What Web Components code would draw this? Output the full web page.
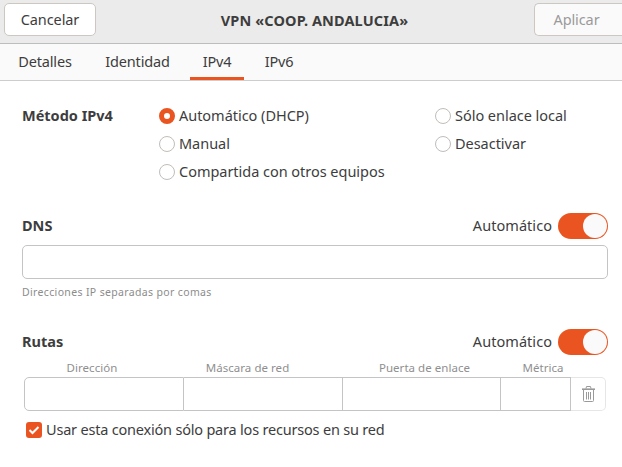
<!DOCTYPE html>
<html>
<head>
<meta charset="utf-8">
<style>
html, body { margin: 0; height: 100%; background: #fff; }
body { font: 14.5px "Noto Sans", "Open Sans", sans-serif; color: #3d3d3d; overflow: hidden; }
</style>
</head>
<body>
<vpn-header></vpn-header>
<tab-bar></tab-bar>
<ipv4-page></ipv4-page>
<script>
customElements.define("vpn-header", class extends HTMLElement {
    constructor() {
        super();
        this.attachShadow({ mode: "open" }).innerHTML = `
        <style>
            :host { display: grid; grid-template-columns: 92px 1fr 88px; align-items: start; height: 43px; box-sizing: content-box; padding-left: 4px; background: #ebebeb; border-bottom: 1px solid #bdbdbd; }
            .btn { height: 33px; margin-top: 3px; box-sizing: border-box; border: 1px solid #cdc7c2; border-radius: 5px; background: #fff; display: flex; align-items: center; justify-content: center; letter-spacing: -.1px; padding-bottom: 1px; }
            .btn.off { color: #9a9a9a; background: #fafafa; border-right: 0; border-radius: 5px 0 0 5px; padding-right: 4px; }
            .title { text-align: center; font-weight: 700; font-size: 14.5px; letter-spacing: .12px; line-height: 40px; padding-right: 1px; }
        </style>
        <div class="btn">Cancelar</div>
        <div class="title">VPN «COOP. ANDALUCIA»</div>
        <div class="btn off">Aplicar</div>`;
    }
});

customElements.define("tab-bar", class extends HTMLElement {
    constructor() {
        super();
        this.attachShadow({ mode: "open" }).innerHTML = `
        <style>
            :host { display: flex; gap: 8px; height: 36px; padding-left: 5px; background: #fafafa; border-bottom: 1px solid #cdcdcd; }
            div { display: flex; align-items: center; justify-content: center; box-sizing: border-box; padding-bottom: 2px; height: 36px; letter-spacing: -.15px; }
            .on { border-bottom: 3px solid #e95420; padding-bottom: 0; }
        </style>
        <div style="width:80px">Detalles</div>
        <div style="width:89px">Identidad</div>
        <div class="on" style="width:54px">IPv4</div>
        <div style="width:54px">IPv6</div>`;
    }
});

customElements.define("radio-opt", class extends HTMLElement {
    constructor() {
        super();
        this.attachShadow({ mode: "open" }).innerHTML = `
        <style>
            :host { display: flex; align-items: center; gap: 4px; height: 28px; }
            i { width: 16px; height: 16px; box-sizing: border-box; border: 1px solid #c2bdb8; border-radius: 50%; background: #fff; flex: none; }
            :host([on]) i { border: 5px solid #e95420; }
            span { padding-bottom: 2px; letter-spacing: -.03px; }
        </style>
        <i></i><span><slot></slot></span>`;
    }
});

customElements.define("auto-switch", class extends HTMLElement {
    constructor() {
        super();
        this.attachShadow({ mode: "open" }).innerHTML = `
        <style>
            :host { display: flex; align-items: center; gap: 6px; }
            span { padding-bottom: 2px; letter-spacing: .05px; }
            b { display: block; width: 50px; height: 26px; box-sizing: border-box; padding: 1px; border-radius: 13px; background: #e95420; }
            b::after { content: ""; display: block; width: 24px; height: 24px; margin-left: 24px; border-radius: 50%; background: #fafafa; }
        </style>
        <span>Automático</span><b></b>`;
    }
});

customElements.define("section-head", class extends HTMLElement {
    constructor() {
        super();
        this.attachShadow({ mode: "open" }).innerHTML = `
        <style>
            :host { display: flex; align-items: center; justify-content: space-between; height: 26px; }
            span { font-weight: 700; font-size: 14.5px; padding-bottom: 2px; }
        </style>
        <span><slot></slot></span><auto-switch></auto-switch>`;
    }
});

customElements.define("route-table", class extends HTMLElement {
    constructor() {
        super();
        this.attachShadow({ mode: "open" }).innerHTML = `
        <style>
            :host { display: block; margin: 0 2px; }
            .heads { display: grid; grid-template-columns: 136px 175px 179px 58px; height: 22px; font-size: 11.5px; color: #8f8f8f; letter-spacing: .04px; }
            .heads div { display: flex; align-items: center; justify-content: center; padding-top: 2px; box-sizing: border-box; }
            .cells { display: grid; grid-template-columns: 160px 159px 158px 70px 35px; height: 34px; }
            .cells div { border: 1px solid #c4c4c4; border-left: 0; }
            .cells div:first-child { border-left: 1px solid #c4c4c4; border-radius: 5px 0 0 5px; }
            .cells .del { border: 1px solid #e6e6e6; border-left: 0; border-radius: 0 5px 5px 0; display: flex; align-items: center; justify-content: center; }
        </style>
        <div class="heads"><div>Dirección</div><div>Máscara de red</div><div>Puerta de enlace</div><div>Métrica</div></div>
        <div class="cells"><div></div><div></div><div></div><div></div>
            <div class="del"><svg width="13" height="16" viewBox="0 0 13 16" fill="none" stroke="#9a9a9a"><path stroke-width="1.6" d="M0 3.2h13"/><path d="M4 2.5L4.5.5h4L9 2.5M1.5 4v10.5q0 1 1 1h8q1 0 1-1V4M4.5 6v7.5M6.5 6v7.5M8.5 6v7.5"/></svg></div>
        </div>`;
    }
});

customElements.define("check-row", class extends HTMLElement {
    constructor() {
        super();
        this.attachShadow({ mode: "open" }).innerHTML = `
        <style>
            :host { display: flex; align-items: center; gap: 4px; height: 16px; margin-left: 4px; }
            i { width: 16px; height: 16px; border-radius: 3px; background: #e95420; flex: none; display: flex; }
            span { padding-bottom: 2px; letter-spacing: -.2px; white-space: nowrap; }
        </style>
        <i><svg width="16" height="16" viewBox="0 0 16 16" fill="none" stroke="#fff" stroke-width="2"><path d="M3.5 8l3 3 6-6"/></svg></i><span><slot></slot></span>`;
    }
});

customElements.define("ipv4-page", class extends HTMLElement {
    constructor() {
        super();
        this.attachShadow({ mode: "open" }).innerHTML = `
        <style>
            :host { display: block; padding: 21px 14px 0 22px; }
            .method { display: grid; grid-template-columns: 137px 276px 1fr; height: 84px; }
            .method b { font-size: 14.5px; line-height: 27px; }
            .entry { height: 34px; box-sizing: border-box; margin-top: 6px; border: 1px solid #c4c4c4; border-radius: 5px; }
            .hint { height: 26px; line-height: 26px; font-size: 10.5px; color: #8c8c8c; letter-spacing: .35px; }
            .dns { margin-top: 27px; }
            .routes { margin-top: 24px; }
            check-row { margin-top: 11px; }
        </style>
        <div class="method">
            <b>Método IPv4</b>
            <div>
                <radio-opt on>Automático (DHCP)</radio-opt>
                <radio-opt>Manual</radio-opt>
                <radio-opt>Compartida con otros equipos</radio-opt>
            </div>
            <div>
                <radio-opt>Sólo enlace local</radio-opt>
                <radio-opt>Desactivar</radio-opt>
            </div>
        </div>
        <section-head class="dns">DNS</section-head>
        <div class="entry"></div>
        <div class="hint">Direcciones IP separadas por comas</div>
        <section-head class="routes">Rutas</section-head>
        <route-table></route-table>
        <check-row>Usar esta conexión sólo para los recursos en su red</check-row>`;
    }
});
</script>
</body>
</html>
